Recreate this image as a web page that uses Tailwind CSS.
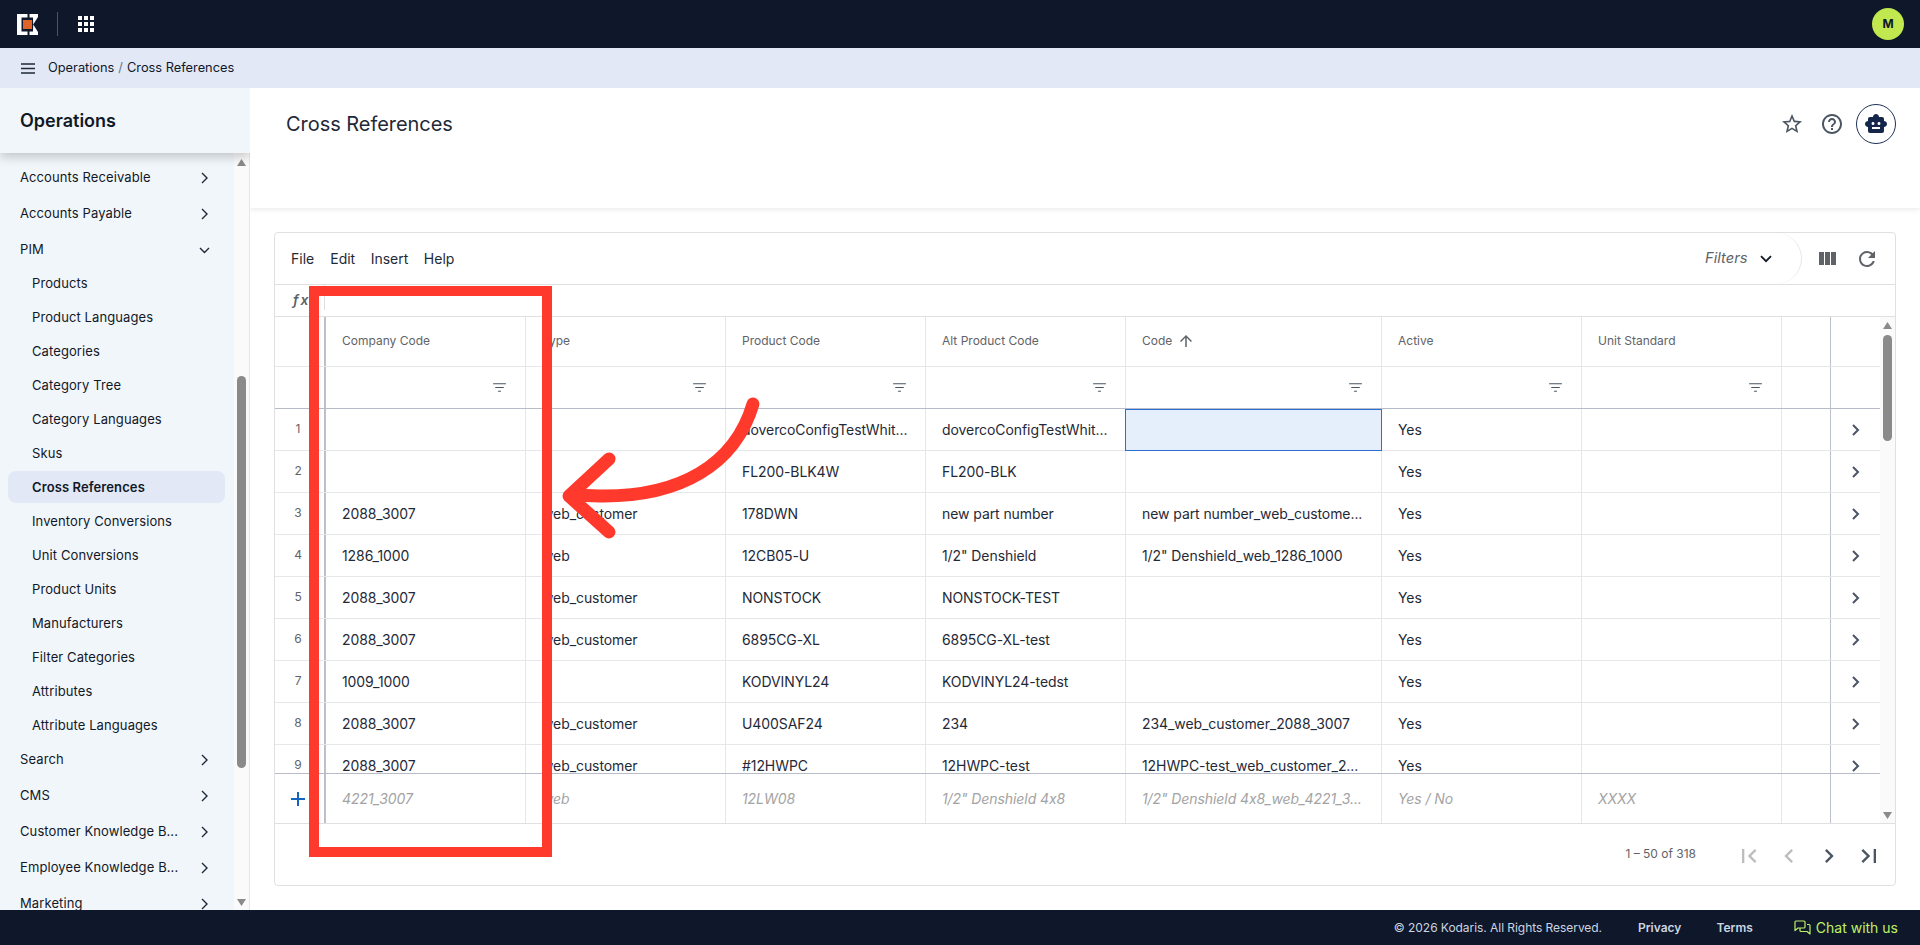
<!DOCTYPE html>
<html lang="en">
<head>
<meta charset="utf-8">
<title>Cross References</title>
<script src="https://cdn.jsdelivr.net/npm/@tailwindcss/browser@4"></script>
</head>
<body class="font-['Inter',sans-serif] text-[#1f2937] bg-white overflow-hidden">
<div class="relative w-[1920px] h-[945px] flex flex-col overflow-hidden">
  <!-- Top bar -->
  <header class="h-[48px] shrink-0 bg-[#0f172a] flex items-center pl-[17px] pr-[16px]">
    <svg width="21" height="21" viewBox="0 0 21 21" class="shrink-0">
      <path fill="#fff" d="M0 0H10.500V3.500H4.500V17.500H10.500V21H0Z"/>
      <path fill="#fff" d="M12.500 0H21V3L16.200 10.500L21 18V21H12.500V17.500H16L16.200 10.500L16 3.500H12.500Z"/>
      <rect x="6" y="6" width="9" height="9" fill="#e0632a"/>
    </svg>
    <div class="w-px h-[24px] bg-[#475569] ml-[19px]"></div>
    <svg width="16" height="16" viewBox="0 0 16 16" fill="#fff" class="ml-[20px]">
      <rect x="0" y="0" width="4" height="4"/><rect x="6" y="0" width="4" height="4"/><rect x="12" y="0" width="4" height="4"/>
      <rect x="0" y="6" width="4" height="4"/><rect x="6" y="6" width="4" height="4"/><rect x="12" y="6" width="4" height="4"/>
      <rect x="0" y="12" width="4" height="4"/><rect x="6" y="12" width="4" height="4"/><rect x="12" y="12" width="4" height="4"/>
    </svg>
    <div class="ml-auto w-[32px] h-[32px] rounded-full bg-[#c1e84e] flex items-center justify-center text-[12px] font-bold text-[#0f172a]">M</div>
  </header>
  <!-- Breadcrumb -->
  <div class="h-[40px] shrink-0 bg-[#e2e8f5] flex items-center pl-[21px] text-[12.800px] text-[#0f172a]">
    <svg width="14" height="11" viewBox="0 0 14 11" class="shrink-0"><path d="M0 1H14M0 5.500H14M0 10H14" stroke="#1f2937" stroke-width="1.500"/></svg>
    <span class="ml-[13px]">Operations</span><span class="mx-[4px] text-[#64748b]">/</span><span>Cross References</span>
  </div>
  <div class="flex-1 flex min-h-0">
    <!-- Sidebar -->
    <aside class="w-[250px] shrink-0 flex flex-col bg-[#f1f6fb] border-r border-[#e5e7eb] min-h-0 [clip-path:inset(0_0_0_0)]">
      <div class="h-[65px] shrink-0 w-[250px] bg-[#f1f6fb] shadow-[0_4px_10px_rgba(0,0,0,0.2)] relative z-10 flex items-center pl-[20px] text-[18px] font-semibold text-[#111827] pb-[1px]">Operations</div>
      <div class="flex-1 flex min-h-0">
        <nav class="flex-1 min-w-0 overflow-hidden pt-[7px] text-[13px] tracking-[0.1px] text-[#111827]">
          <div class="h-[36px] flex items-center justify-between pl-[20px] pr-[26px]">Accounts Receivable<svg width="7" height="12" viewBox="0 0 7 12" fill="none"><path d="M1 1l5 5-5 5" stroke="#1f2937" stroke-width="1.400"/></svg></div>
          <div class="h-[36px] flex items-center justify-between pl-[20px] pr-[26px]">Accounts Payable<svg width="7" height="12" viewBox="0 0 7 12" fill="none"><path d="M1 1l5 5-5 5" stroke="#1f2937" stroke-width="1.400"/></svg></div>
          <div class="h-[36px] flex items-center justify-between pl-[20px] pr-[24px]">PIM<svg width="11" height="7" viewBox="0 0 11 7" fill="none"><path d="M1 1l4.500 4.500L10 1" stroke="#1f2937" stroke-width="1.400"/></svg></div>
          <div class="-my-px">
            <div class="h-[34px] flex items-center pl-[32px]">Products</div>
            <div class="h-[34px] flex items-center pl-[32px]">Product Languages</div>
            <div class="h-[34px] flex items-center pl-[32px]">Categories</div>
            <div class="h-[34px] flex items-center pl-[32px]">Category Tree</div>
            <div class="h-[34px] flex items-center pl-[32px]">Category Languages</div>
            <div class="h-[34px] flex items-center pl-[32px]">Skus</div>
            <div class="h-[34px] py-px"><div class="h-[32px] ml-[8px] mr-[9px] pl-[24px] -mt-px flex items-center bg-[#e2e8f5] rounded-lg font-semibold pt-px">Cross References</div></div>
            <div class="h-[34px] flex items-center pl-[32px]">Inventory Conversions</div>
            <div class="h-[34px] flex items-center pl-[32px]">Unit Conversions</div>
            <div class="h-[34px] flex items-center pl-[32px]">Product Units</div>
            <div class="h-[34px] flex items-center pl-[32px]">Manufacturers</div>
            <div class="h-[34px] flex items-center pl-[32px]">Filter Categories</div>
            <div class="h-[34px] flex items-center pl-[32px]">Attributes</div>
            <div class="h-[34px] flex items-center pl-[32px]">Attribute Languages</div>
          </div>
          <div class="h-[36px] flex items-center justify-between pl-[20px] pr-[26px]">Search<svg width="7" height="12" viewBox="0 0 7 12" fill="none"><path d="M1 1l5 5-5 5" stroke="#1f2937" stroke-width="1.400"/></svg></div>
          <div class="h-[36px] flex items-center justify-between pl-[20px] pr-[26px]">CMS<svg width="7" height="12" viewBox="0 0 7 12" fill="none"><path d="M1 1l5 5-5 5" stroke="#1f2937" stroke-width="1.400"/></svg></div>
          <div class="h-[36px] flex items-center justify-between pl-[20px] pr-[26px]">Customer Knowledge B...<svg width="7" height="12" viewBox="0 0 7 12" fill="none"><path d="M1 1l5 5-5 5" stroke="#1f2937" stroke-width="1.400"/></svg></div>
          <div class="h-[36px] flex items-center justify-between pl-[20px] pr-[26px]">Employee Knowledge B...<svg width="7" height="12" viewBox="0 0 7 12" fill="none"><path d="M1 1l5 5-5 5" stroke="#1f2937" stroke-width="1.400"/></svg></div>
          <div class="h-[36px] flex items-center justify-between pl-[20px] pr-[26px]">Marketing<svg width="7" height="12" viewBox="0 0 7 12" fill="none"><path d="M1 1l5 5-5 5" stroke="#1f2937" stroke-width="1.400"/></svg></div>
        </nav>
        <div class="w-[15px] shrink-0 bg-[#fafafa] flex flex-col items-center pt-[6px] pb-[4px]">
          <svg width="9" height="7" viewBox="0 0 9 7" class="shrink-0"><path d="M4.500 0L9 7H0Z" fill="#8a8a8a"/></svg>
          <div class="w-[9px] h-[392px] rounded-full bg-[#8a8a8a] mt-[210px] mb-auto"></div>
          <svg width="9" height="7" viewBox="0 0 9 7" class="shrink-0"><path d="M0 0H9L4.500 7Z" fill="#8a8a8a"/></svg>
        </div>
      </div>
    </aside>
    <!-- Main -->
    <main class="flex-1 min-w-0 flex flex-col bg-white">
      <div class="h-[120px] shrink-0 shadow-[0_1px_6px_rgba(0,0,0,0.1)] [clip-path:inset(0_0_-12px_0)] flex items-start pl-[36px] pr-[24px] pt-[22px]">
        <h1 class="text-[20px] leading-[28px] tracking-[-0.05px] text-[#1f2937]">Cross References</h1>
        <div class="ml-auto flex items-center -mt-[6px]">
          <svg width="24" height="24" viewBox="0 0 24 24" fill="#4b5563"><path d="M22 9.240l-7.190-.620L12 2 9.190 8.630 2 9.240l5.460 4.730L5.820 21 12 17.270 18.180 21l-1.630-7.030L22 9.240zM12 15.400l-3.760 2.270 1-4.280-3.320-2.880 4.380-.380L12 6.100l1.710 4.040 4.380.380-3.320 2.880 1 4.280L12 15.400z"/></svg>
          <svg width="24" height="24" viewBox="0 0 24 24" fill="#4b5563" class="ml-[16px]"><path d="M11 18h2v-2h-2v2zm1-16C6.480 2 2 6.480 2 12s4.480 10 10 10 10-4.480 10-10S17.520 2 12 2zm0 18c-4.410 0-8-3.590-8-8s3.590-8 8-8 8 3.590 8 8-3.590 8-8 8zm0-14c-2.210 0-4 1.790-4 4h2c0-1.100.9-2 2-2s2 .9 2 2c0 2-3 1.750-3 5h2c0-2.250 3-2.500 3-5 0-2.210-1.790-4-4-4z"/></svg>
          <div class="ml-[12px] w-[40px] h-[40px] rounded-full border border-[#1e3358] flex items-center justify-center">
            <svg width="24" height="24" viewBox="0 0 24 24" fill="#14264a"><path d="M20 9V7c0-1.100-.9-2-2-2h-3c0-1.660-1.340-3-3-3S9 3.340 9 5H6c-1.100 0-2 .9-2 2v2c-1.660 0-3 1.340-3 3s1.340 3 3 3v4c0 1.100.9 2 2 2h12c1.100 0 2-.9 2-2v-4c1.660 0 3-1.340 3-3s-1.340-3-3-3zM7.500 11.500c0-.83.67-1.500 1.500-1.500s1.500.67 1.500 1.500S9.830 13 9 13s-1.500-.67-1.500-1.500zM16 17H8v-2h8v2zm-1-4c-.83 0-1.500-.67-1.500-1.500S14.170 10 15 10s1.500.67 1.500 1.500S15.830 13 15 13z"/></svg>
          </div>
        </div>
      </div>
      <div class="flex-1 min-h-0 pl-[24px] pr-[24px] pt-[24px]">
        <section class="w-[1622px] h-[654px] border border-[#e0e0e0] rounded-[4px] flex flex-col bg-white">
          <!-- Toolbar -->
          <div class="h-[52px] shrink-0 border-b border-[#e0e0e0] flex items-center pl-[16px] text-[14px] text-[#1f2937] relative">
            <span>File</span><span class="ml-[16px]">Edit</span><span class="ml-[15.500px]">Insert</span><span class="ml-[15.500px]">Help</span>
            <div class="ml-auto w-[220px] h-[51px] rounded-r-[26px] border-r border-[#e5e7eb] flex items-center justify-end pr-[29px] shrink-0">
              <span class="italic text-[14.700px] text-[#5f6368]">Filters</span>
              <svg width="12" height="8" viewBox="0 0 12 8" fill="none" class="ml-[12px]"><path d="M1 1.200l5 5 5-5" stroke="#111827" stroke-width="1.800"/></svg>
            </div>
            <svg width="24" height="24" viewBox="0 0 24 24" fill="#5f6368" class="ml-[13px]"><path d="M10 18h5V5h-5v13zm-6 0h5V5H4v13zM16 5v13h5V5h-5z"/></svg>
            <svg width="24" height="24" viewBox="0 0 24 24" fill="#5f6368" class="ml-[16.500px] mr-[16px]"><path d="M17.650 6.350C16.200 4.900 14.210 4 12 4c-4.420 0-7.990 3.580-7.990 8s3.570 8 7.990 8c3.730 0 6.840-2.550 7.730-6h-2.080c-.82 2.330-3.040 4-5.650 4-3.310 0-6-2.690-6-6s2.690-6 6-6c1.660 0 3.140.69 4.220 1.780L13 11h7V4l-2.350 2.350z"/></svg>
          </div>
          <!-- fx -->
          <div class="h-[32px] shrink-0 border-b border-[#e0e0e0] flex items-start">
            <div class="w-[50px] h-[25px] border-r border-[#e0e0e0] pl-[18px] italic font-semibold text-[14px] tracking-[2px] leading-[29px] text-[#5f6368]">fx</div>
          </div>
          <!-- Grid -->
          <div class="h-[507px] shrink-0 border-b border-[#e0e0e0] flex">
            <div class="w-[1605px] shrink-0 flex flex-col">
              <!-- Header row -->
              <div class="h-[50px] shrink-0 flex border-b border-[#e5e7eb] text-[12px] text-[#5f6368]">
                <div class="w-[51px] shrink-0 border-r-2 border-[#bcc0ca]"></div>
                <div class="w-[200px] shrink-0 border-r border-[#e5e7eb] flex items-center pl-[16px] pb-[2px]">Company Code</div>
                <div class="w-[200px] shrink-0 border-r border-[#e5e7eb] flex items-center pl-[16px] pb-[2px]">Type</div>
                <div class="w-[200px] shrink-0 border-r border-[#e5e7eb] flex items-center pl-[16px] pb-[2px]">Product Code</div>
                <div class="w-[200px] shrink-0 border-r border-[#e5e7eb] flex items-center pl-[16px] pb-[2px]">Alt Product Code</div>
                <div class="w-[256px] shrink-0 border-r border-[#e5e7eb] flex items-center pl-[16px] pb-[2px]">Code<svg width="18" height="18" viewBox="0 0 24 24" fill="#5f6368" class="ml-[5px]"><path d="M4 12l1.410 1.410L11 7.830V20h2V7.830l5.580 5.590L20 12l-8-8-8 8z"/></svg></div>
                <div class="w-[200px] shrink-0 border-r border-[#e5e7eb] flex items-center pl-[16px] pb-[2px]">Active</div>
                <div class="w-[200px] shrink-0 border-r border-[#e5e7eb] flex items-center pl-[16px] pb-[2px]">Unit Standard</div>
                <div class="w-[49px] shrink-0 border-r border-[#bcc0ca]"></div>
              </div>
              <!-- Filter row -->
              <div class="h-[42px] shrink-0 flex border-b border-[#b8bcc8]">
                <div class="w-[51px] shrink-0 border-r-2 border-[#bcc0ca]"></div>
                <div class="w-[200px] shrink-0 border-r border-[#e5e7eb] flex items-center justify-end pr-[17px]"><svg width="17" height="17" viewBox="0 0 24 24" fill="#4b5563"><path d="M10 18h4v-1.500h-4V18zM3 6v1.500h18V6H3zm3 6.800h12v-1.500H6v1.500z"/></svg></div>
                <div class="w-[200px] shrink-0 border-r border-[#e5e7eb] flex items-center justify-end pr-[17px]"><svg width="17" height="17" viewBox="0 0 24 24" fill="#4b5563"><path d="M10 18h4v-1.500h-4V18zM3 6v1.500h18V6H3zm3 6.800h12v-1.500H6v1.500z"/></svg></div>
                <div class="w-[200px] shrink-0 border-r border-[#e5e7eb] flex items-center justify-end pr-[17px]"><svg width="17" height="17" viewBox="0 0 24 24" fill="#4b5563"><path d="M10 18h4v-1.500h-4V18zM3 6v1.500h18V6H3zm3 6.800h12v-1.500H6v1.500z"/></svg></div>
                <div class="w-[200px] shrink-0 border-r border-[#e5e7eb] flex items-center justify-end pr-[17px]"><svg width="17" height="17" viewBox="0 0 24 24" fill="#4b5563"><path d="M10 18h4v-1.500h-4V18zM3 6v1.500h18V6H3zm3 6.800h12v-1.500H6v1.500z"/></svg></div>
                <div class="w-[256px] shrink-0 border-r border-[#e5e7eb] flex items-center justify-end pr-[17px]"><svg width="17" height="17" viewBox="0 0 24 24" fill="#4b5563"><path d="M10 18h4v-1.500h-4V18zM3 6v1.500h18V6H3zm3 6.800h12v-1.500H6v1.500z"/></svg></div>
                <div class="w-[200px] shrink-0 border-r border-[#e5e7eb] flex items-center justify-end pr-[17px]"><svg width="17" height="17" viewBox="0 0 24 24" fill="#4b5563"><path d="M10 18h4v-1.500h-4V18zM3 6v1.500h18V6H3zm3 6.800h12v-1.500H6v1.500z"/></svg></div>
                <div class="w-[200px] shrink-0 border-r border-[#e5e7eb] flex items-center justify-end pr-[17px]"><svg width="17" height="17" viewBox="0 0 24 24" fill="#4b5563"><path d="M10 18h4v-1.500h-4V18zM3 6v1.500h18V6H3zm3 6.800h12v-1.500H6v1.500z"/></svg></div>
                <div class="w-[49px] shrink-0 border-r border-[#bcc0ca]"></div>
              </div>
              <!-- Body rows -->
              <div class="h-[364px] shrink-0 overflow-hidden text-[14px] tracking-[-0.08px]">
                <div class="h-[42px] flex border-b border-[#e5e7eb]">
                  <div class="w-[51px] shrink-0 border-r-2 border-[#bcc0ca] flex items-center justify-center pr-[3px] pb-[2px] text-[12px] text-[#5f6368]">1</div>
                  <div class="w-[200px] shrink-0 border-r border-[#e5e7eb] flex items-center pl-[16px]"></div>
                  <div class="w-[200px] shrink-0 border-r border-[#e5e7eb] flex items-center pl-[16px]"></div>
                  <div class="w-[200px] shrink-0 border-r border-[#e5e7eb] flex items-center pl-[16px]">dovercoConfigTestWhit...</div>
                  <div class="w-[200px] shrink-0 border-r border-[#e5e7eb] flex items-center pl-[16px]">dovercoConfigTestWhit...</div>
                  <div class="w-[257px] -ml-px h-[42px] shrink-0 border border-[#2b6fd4] bg-[#e5effb]"></div>
                  <div class="w-[200px] shrink-0 border-r border-[#e5e7eb] flex items-center pl-[16px]">Yes</div>
                  <div class="w-[200px] shrink-0 border-r border-[#e5e7eb]"></div>
                  <div class="w-[49px] shrink-0 border-r border-[#bcc0ca]"></div>
                  <div class="flex-1 flex items-center justify-center pl-[1px]"><svg width="8" height="12" viewBox="0 0 8 12" fill="none"><path d="M1 1l5 5-5 5" stroke="#4b5563" stroke-width="2"/></svg></div>
                </div>
                <div class="h-[42px] flex border-b border-[#e5e7eb]">
                  <div class="w-[51px] shrink-0 border-r-2 border-[#bcc0ca] flex items-center justify-center pr-[3px] pb-[2px] text-[12px] text-[#5f6368]">2</div>
                  <div class="w-[200px] shrink-0 border-r border-[#e5e7eb] flex items-center pl-[16px]"></div>
                  <div class="w-[200px] shrink-0 border-r border-[#e5e7eb] flex items-center pl-[16px]"></div>
                  <div class="w-[200px] shrink-0 border-r border-[#e5e7eb] flex items-center pl-[16px]">FL200-BLK4W</div>
                  <div class="w-[200px] shrink-0 border-r border-[#e5e7eb] flex items-center pl-[16px]">FL200-BLK</div>
                  <div class="w-[256px] shrink-0 border-r border-[#e5e7eb] flex items-center pl-[16px]"></div>
                  <div class="w-[200px] shrink-0 border-r border-[#e5e7eb] flex items-center pl-[16px]">Yes</div>
                  <div class="w-[200px] shrink-0 border-r border-[#e5e7eb]"></div>
                  <div class="w-[49px] shrink-0 border-r border-[#bcc0ca]"></div>
                  <div class="flex-1 flex items-center justify-center pl-[1px]"><svg width="8" height="12" viewBox="0 0 8 12" fill="none"><path d="M1 1l5 5-5 5" stroke="#4b5563" stroke-width="2"/></svg></div>
                </div>
                <div class="h-[42px] flex border-b border-[#e5e7eb]">
                  <div class="w-[51px] shrink-0 border-r-2 border-[#bcc0ca] flex items-center justify-center pr-[3px] pb-[2px] text-[12px] text-[#5f6368]">3</div>
                  <div class="w-[200px] shrink-0 border-r border-[#e5e7eb] flex items-center pl-[16px]">2088_3007</div>
                  <div class="w-[200px] shrink-0 border-r border-[#e5e7eb] flex items-center pl-[16px]">web_customer</div>
                  <div class="w-[200px] shrink-0 border-r border-[#e5e7eb] flex items-center pl-[16px]">178DWN</div>
                  <div class="w-[200px] shrink-0 border-r border-[#e5e7eb] flex items-center pl-[16px]">new part number</div>
                  <div class="w-[256px] shrink-0 border-r border-[#e5e7eb] flex items-center pl-[16px]">new part number_web_custome...</div>
                  <div class="w-[200px] shrink-0 border-r border-[#e5e7eb] flex items-center pl-[16px]">Yes</div>
                  <div class="w-[200px] shrink-0 border-r border-[#e5e7eb]"></div>
                  <div class="w-[49px] shrink-0 border-r border-[#bcc0ca]"></div>
                  <div class="flex-1 flex items-center justify-center pl-[1px]"><svg width="8" height="12" viewBox="0 0 8 12" fill="none"><path d="M1 1l5 5-5 5" stroke="#4b5563" stroke-width="2"/></svg></div>
                </div>
                <div class="h-[42px] flex border-b border-[#e5e7eb]">
                  <div class="w-[51px] shrink-0 border-r-2 border-[#bcc0ca] flex items-center justify-center pr-[3px] pb-[2px] text-[12px] text-[#5f6368]">4</div>
                  <div class="w-[200px] shrink-0 border-r border-[#e5e7eb] flex items-center pl-[16px]">1286_1000</div>
                  <div class="w-[200px] shrink-0 border-r border-[#e5e7eb] flex items-center pl-[16px]">web</div>
                  <div class="w-[200px] shrink-0 border-r border-[#e5e7eb] flex items-center pl-[16px]">12CB05-U</div>
                  <div class="w-[200px] shrink-0 border-r border-[#e5e7eb] flex items-center pl-[16px]">1/2" Denshield</div>
                  <div class="w-[256px] shrink-0 border-r border-[#e5e7eb] flex items-center pl-[16px]">1/2" Denshield_web_1286_1000</div>
                  <div class="w-[200px] shrink-0 border-r border-[#e5e7eb] flex items-center pl-[16px]">Yes</div>
                  <div class="w-[200px] shrink-0 border-r border-[#e5e7eb]"></div>
                  <div class="w-[49px] shrink-0 border-r border-[#bcc0ca]"></div>
                  <div class="flex-1 flex items-center justify-center pl-[1px]"><svg width="8" height="12" viewBox="0 0 8 12" fill="none"><path d="M1 1l5 5-5 5" stroke="#4b5563" stroke-width="2"/></svg></div>
                </div>
                <div class="h-[42px] flex border-b border-[#e5e7eb]">
                  <div class="w-[51px] shrink-0 border-r-2 border-[#bcc0ca] flex items-center justify-center pr-[3px] pb-[2px] text-[12px] text-[#5f6368]">5</div>
                  <div class="w-[200px] shrink-0 border-r border-[#e5e7eb] flex items-center pl-[16px]">2088_3007</div>
                  <div class="w-[200px] shrink-0 border-r border-[#e5e7eb] flex items-center pl-[16px]">web_customer</div>
                  <div class="w-[200px] shrink-0 border-r border-[#e5e7eb] flex items-center pl-[16px]">NONSTOCK</div>
                  <div class="w-[200px] shrink-0 border-r border-[#e5e7eb] flex items-center pl-[16px]">NONSTOCK-TEST</div>
                  <div class="w-[256px] shrink-0 border-r border-[#e5e7eb] flex items-center pl-[16px]"></div>
                  <div class="w-[200px] shrink-0 border-r border-[#e5e7eb] flex items-center pl-[16px]">Yes</div>
                  <div class="w-[200px] shrink-0 border-r border-[#e5e7eb]"></div>
                  <div class="w-[49px] shrink-0 border-r border-[#bcc0ca]"></div>
                  <div class="flex-1 flex items-center justify-center pl-[1px]"><svg width="8" height="12" viewBox="0 0 8 12" fill="none"><path d="M1 1l5 5-5 5" stroke="#4b5563" stroke-width="2"/></svg></div>
                </div>
                <div class="h-[42px] flex border-b border-[#e5e7eb]">
                  <div class="w-[51px] shrink-0 border-r-2 border-[#bcc0ca] flex items-center justify-center pr-[3px] pb-[2px] text-[12px] text-[#5f6368]">6</div>
                  <div class="w-[200px] shrink-0 border-r border-[#e5e7eb] flex items-center pl-[16px]">2088_3007</div>
                  <div class="w-[200px] shrink-0 border-r border-[#e5e7eb] flex items-center pl-[16px]">web_customer</div>
                  <div class="w-[200px] shrink-0 border-r border-[#e5e7eb] flex items-center pl-[16px]">6895CG-XL</div>
                  <div class="w-[200px] shrink-0 border-r border-[#e5e7eb] flex items-center pl-[16px]">6895CG-XL-test</div>
                  <div class="w-[256px] shrink-0 border-r border-[#e5e7eb] flex items-center pl-[16px]"></div>
                  <div class="w-[200px] shrink-0 border-r border-[#e5e7eb] flex items-center pl-[16px]">Yes</div>
                  <div class="w-[200px] shrink-0 border-r border-[#e5e7eb]"></div>
                  <div class="w-[49px] shrink-0 border-r border-[#bcc0ca]"></div>
                  <div class="flex-1 flex items-center justify-center pl-[1px]"><svg width="8" height="12" viewBox="0 0 8 12" fill="none"><path d="M1 1l5 5-5 5" stroke="#4b5563" stroke-width="2"/></svg></div>
                </div>
                <div class="h-[42px] flex border-b border-[#e5e7eb]">
                  <div class="w-[51px] shrink-0 border-r-2 border-[#bcc0ca] flex items-center justify-center pr-[3px] pb-[2px] text-[12px] text-[#5f6368]">7</div>
                  <div class="w-[200px] shrink-0 border-r border-[#e5e7eb] flex items-center pl-[16px]">1009_1000</div>
                  <div class="w-[200px] shrink-0 border-r border-[#e5e7eb] flex items-center pl-[16px]"></div>
                  <div class="w-[200px] shrink-0 border-r border-[#e5e7eb] flex items-center pl-[16px]">KODVINYL24</div>
                  <div class="w-[200px] shrink-0 border-r border-[#e5e7eb] flex items-center pl-[16px]">KODVINYL24-tedst</div>
                  <div class="w-[256px] shrink-0 border-r border-[#e5e7eb] flex items-center pl-[16px]"></div>
                  <div class="w-[200px] shrink-0 border-r border-[#e5e7eb] flex items-center pl-[16px]">Yes</div>
                  <div class="w-[200px] shrink-0 border-r border-[#e5e7eb]"></div>
                  <div class="w-[49px] shrink-0 border-r border-[#bcc0ca]"></div>
                  <div class="flex-1 flex items-center justify-center pl-[1px]"><svg width="8" height="12" viewBox="0 0 8 12" fill="none"><path d="M1 1l5 5-5 5" stroke="#4b5563" stroke-width="2"/></svg></div>
                </div>
                <div class="h-[42px] flex border-b border-[#e5e7eb]">
                  <div class="w-[51px] shrink-0 border-r-2 border-[#bcc0ca] flex items-center justify-center pr-[3px] pb-[2px] text-[12px] text-[#5f6368]">8</div>
                  <div class="w-[200px] shrink-0 border-r border-[#e5e7eb] flex items-center pl-[16px]">2088_3007</div>
                  <div class="w-[200px] shrink-0 border-r border-[#e5e7eb] flex items-center pl-[16px]">web_customer</div>
                  <div class="w-[200px] shrink-0 border-r border-[#e5e7eb] flex items-center pl-[16px]">U400SAF24</div>
                  <div class="w-[200px] shrink-0 border-r border-[#e5e7eb] flex items-center pl-[16px]">234</div>
                  <div class="w-[256px] shrink-0 border-r border-[#e5e7eb] flex items-center pl-[16px]">234_web_customer_2088_3007</div>
                  <div class="w-[200px] shrink-0 border-r border-[#e5e7eb] flex items-center pl-[16px]">Yes</div>
                  <div class="w-[200px] shrink-0 border-r border-[#e5e7eb]"></div>
                  <div class="w-[49px] shrink-0 border-r border-[#bcc0ca]"></div>
                  <div class="flex-1 flex items-center justify-center pl-[1px]"><svg width="8" height="12" viewBox="0 0 8 12" fill="none"><path d="M1 1l5 5-5 5" stroke="#4b5563" stroke-width="2"/></svg></div>
                </div>
                <div class="h-[42px] flex border-b border-[#e5e7eb]">
                  <div class="w-[51px] shrink-0 border-r-2 border-[#bcc0ca] flex items-center justify-center pr-[3px] pb-[2px] text-[12px] text-[#5f6368]">9</div>
                  <div class="w-[200px] shrink-0 border-r border-[#e5e7eb] flex items-center pl-[16px]">2088_3007</div>
                  <div class="w-[200px] shrink-0 border-r border-[#e5e7eb] flex items-center pl-[16px]">web_customer</div>
                  <div class="w-[200px] shrink-0 border-r border-[#e5e7eb] flex items-center pl-[16px]">#12HWPC</div>
                  <div class="w-[200px] shrink-0 border-r border-[#e5e7eb] flex items-center pl-[16px]">12HWPC-test</div>
                  <div class="w-[256px] shrink-0 border-r border-[#e5e7eb] flex items-center pl-[16px]">12HWPC-test_web_customer_2...</div>
                  <div class="w-[200px] shrink-0 border-r border-[#e5e7eb] flex items-center pl-[16px]">Yes</div>
                  <div class="w-[200px] shrink-0 border-r border-[#e5e7eb]"></div>
                  <div class="w-[49px] shrink-0 border-r border-[#bcc0ca]"></div>
                  <div class="flex-1 flex items-center justify-center pl-[1px]"><svg width="8" height="12" viewBox="0 0 8 12" fill="none"><path d="M1 1l5 5-5 5" stroke="#4b5563" stroke-width="2"/></svg></div>
                </div>
              </div>
              <!-- Add row -->
              <div class="h-[50px] shrink-0 flex border-t border-[#b8bcc8] text-[14px] tracking-[-0.08px] italic text-[#a3a3a3] [font-variant-ligatures:none] [font-feature-settings:'calt'_0]">
                <div class="w-[51px] shrink-0 border-r-2 border-[#bcc0ca] flex items-center justify-center pr-[3px]"><svg width="16" height="16" viewBox="0 0 16 16"><path d="M8 1V15M1 8H15" stroke="#1565c0" stroke-width="2"/></svg></div>
                <div class="w-[200px] shrink-0 border-r border-[#e5e7eb] flex items-center pl-[16px]">4221_3007</div>
                <div class="w-[200px] shrink-0 border-r border-[#e5e7eb] flex items-center pl-[16px]">web</div>
                <div class="w-[200px] shrink-0 border-r border-[#e5e7eb] flex items-center pl-[16px]">12LW08</div>
                <div class="w-[200px] shrink-0 border-r border-[#e5e7eb] flex items-center pl-[16px]">1/2" Denshield 4x8</div>
                <div class="w-[256px] shrink-0 border-r border-[#e5e7eb] flex items-center pl-[16px]">1/2" Denshield 4x8_web_4221_3...</div>
                <div class="w-[200px] shrink-0 border-r border-[#e5e7eb] flex items-center pl-[16px]">Yes / No</div>
                <div class="w-[200px] shrink-0 border-r border-[#e5e7eb] flex items-center pl-[16px]">XXXX</div>
                <div class="w-[49px] shrink-0 border-r border-[#bcc0ca]"></div>
              </div>
            </div>
            <!-- Grid scrollbar -->
            <div class="w-[15px] shrink-0 bg-[#fafafa] flex flex-col items-center pt-[5px] pb-[4px]">
              <svg width="9" height="7" viewBox="0 0 9 7" class="shrink-0"><path d="M4.500 0L9 7H0Z" fill="#8a8a8a"/></svg>
              <div class="w-[9px] h-[106px] rounded-full bg-[#8a8a8a] mt-[6px] mb-auto"></div>
              <svg width="9" height="7" viewBox="0 0 9 7" class="shrink-0"><path d="M0 0H9L4.500 7Z" fill="#8a8a8a"/></svg>
            </div>
          </div>
          <!-- Pagination -->
          <div class="flex-1 flex items-center justify-end pr-[12px] text-[12px] text-[#5f6368]">
            <span class="mr-[39px] -mt-[1px]">1 – 50 of 318</span>
            <svg width="28" height="28" viewBox="0 0 24 24" fill="#bdbdbd" class="mt-[2px]"><path d="M18.410 16.590L13.820 12l4.590-4.590L17 6l-6 6 6 6zM6 6h2v12H6z"/></svg>
            <svg width="28" height="28" viewBox="0 0 24 24" fill="#bdbdbd" class="ml-[12px] mt-[2px]"><path d="M15.410 7.410L14 6l-6 6 6 6 1.410-1.410L10.830 12z"/></svg>
            <svg width="28" height="28" viewBox="0 0 24 24" fill="#4b5563" class="ml-[12px] mt-[2px]"><path d="M10 6L8.590 7.410 13.170 12l-4.580 4.590L10 18l6-6z"/></svg>
            <svg width="28" height="28" viewBox="0 0 24 24" fill="#4b5563" class="ml-[12px] mt-[2px]"><path d="M5.590 7.410L10.180 12l-4.590 4.590L7 18l6-6-6-6zM16 6h2v12h-2z"/></svg>
          </div>
        </section>
      </div>
    </main>
  </div>
  <!-- Footer -->
  <footer class="h-[35px] shrink-0 bg-[#0f172a] flex items-center justify-end pr-[22px] text-[12px] text-[#cbd5e1]">
    <span class="tracking-[-0.05px]">© 2026 Kodaris. All Rights Reserved.</span>
    <span class="ml-[36px] font-semibold">Privacy</span>
    <span class="ml-[35px] font-semibold">Terms</span>
    <svg width="17" height="15" viewBox="0 0 17 15" fill="none" class="ml-[41px]"><path d="M2 1H10C10.600 1 11 1.400 11 2V7C11 7.600 10.600 8 10 8H4L1 10.500V2C1 1.400 1.400 1 2 1Z M13 4.500H15C15.600 4.500 16 4.900 16 5.500V14L13 11.500H7C6.400 11.500 6 11.100 6 10.500V8.500" stroke="#bef264" stroke-width="1.200" stroke-linejoin="round"/></svg>
    <span class="ml-[5px] text-[14px] text-[#bef264]">Chat with us</span>
  </footer>
  <!-- Annotation overlay -->
  <svg class="absolute left-0 top-0 pointer-events-none" width="1920" height="945" viewBox="0 0 1920 945" fill="none">
    <rect x="314" y="291" width="233" height="561" stroke="#ff3a2d" stroke-width="10"/>
    <path d="M753 404C735 465 680 497 600 496L572 495" stroke="#ff3a2d" stroke-width="13" stroke-linecap="round"/>
    <path d="M609 459L569 496L609 532" stroke="#ff3a2d" stroke-width="13" stroke-linecap="round" stroke-linejoin="round"/>
  </svg>
</div>
</body>
</html>
